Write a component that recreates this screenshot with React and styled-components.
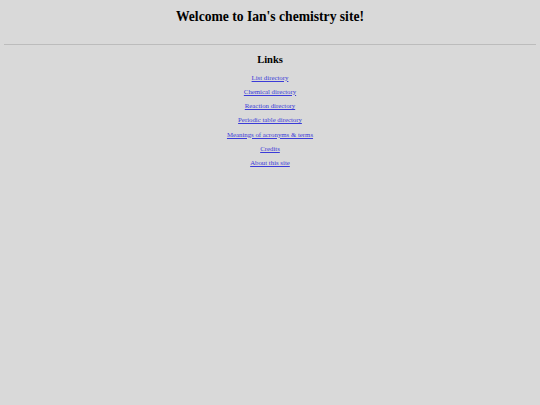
import React from "react";
import styled, { createGlobalStyle } from "styled-components";

const links = [
  "List directory",
  "Chemical directory",
  "Reaction directory",
  "Periodic table directory",
  "Meanings of acronyms & terms",
  "Credits",
  "About this site",
];

const App = () => {
  return (
    <Page>
      <GlobalStyle />
      <Title>Welcome to Ian's chemistry site!</Title>
      <Rule />
      <Section>
        <SectionTitle>Links</SectionTitle>
        <LinkList>
          {links.map((label) => (
            <li key={label}>
              <NavLink href="#">{label}</NavLink>
            </li>
          ))}
        </LinkList>
      </Section>
    </Page>
  );
};

export default App;

const GlobalStyle = createGlobalStyle`
  html, body {
    margin: 0;
    background: #d9d9d9;
  }
  body {
    font-family: "Liberation Serif", "Times New Roman", serif;
    color: #000;
  }
`;

const Page = styled.div`
  min-height: 405px;
  padding: 0 4px;
  box-sizing: border-box;
`;

const Title = styled.h1`
  margin: 0;
  padding-top: 9px;
  font-size: 13.6px;
  font-weight: bold;
  text-align: center;
  line-height: 16px;
`;

const Rule = styled.hr`
  margin: 19px 0 0;
  border: none;
  border-top: 1px solid #bcbcbc;
  height: 0;
`;

const Section = styled.div`
  display: flex;
  flex-direction: column;
  align-items: center;
`;

const SectionTitle = styled.h2`
  margin: 8px 0 0;
  font-size: 10.5px;
  line-height: 14px;
  font-weight: bold;
`;

const LinkList = styled.ul`
  list-style: none;
  margin: 5.5px 0 0;
  padding: 0;
  display: flex;
  flex-direction: column;
  align-items: center;
  gap: 5.3px;
  font-size: 6.8px;
  line-height: 9px;
`;

const NavLink = styled.a`
  color: #3b3bd8;
  text-decoration: underline;
`;
